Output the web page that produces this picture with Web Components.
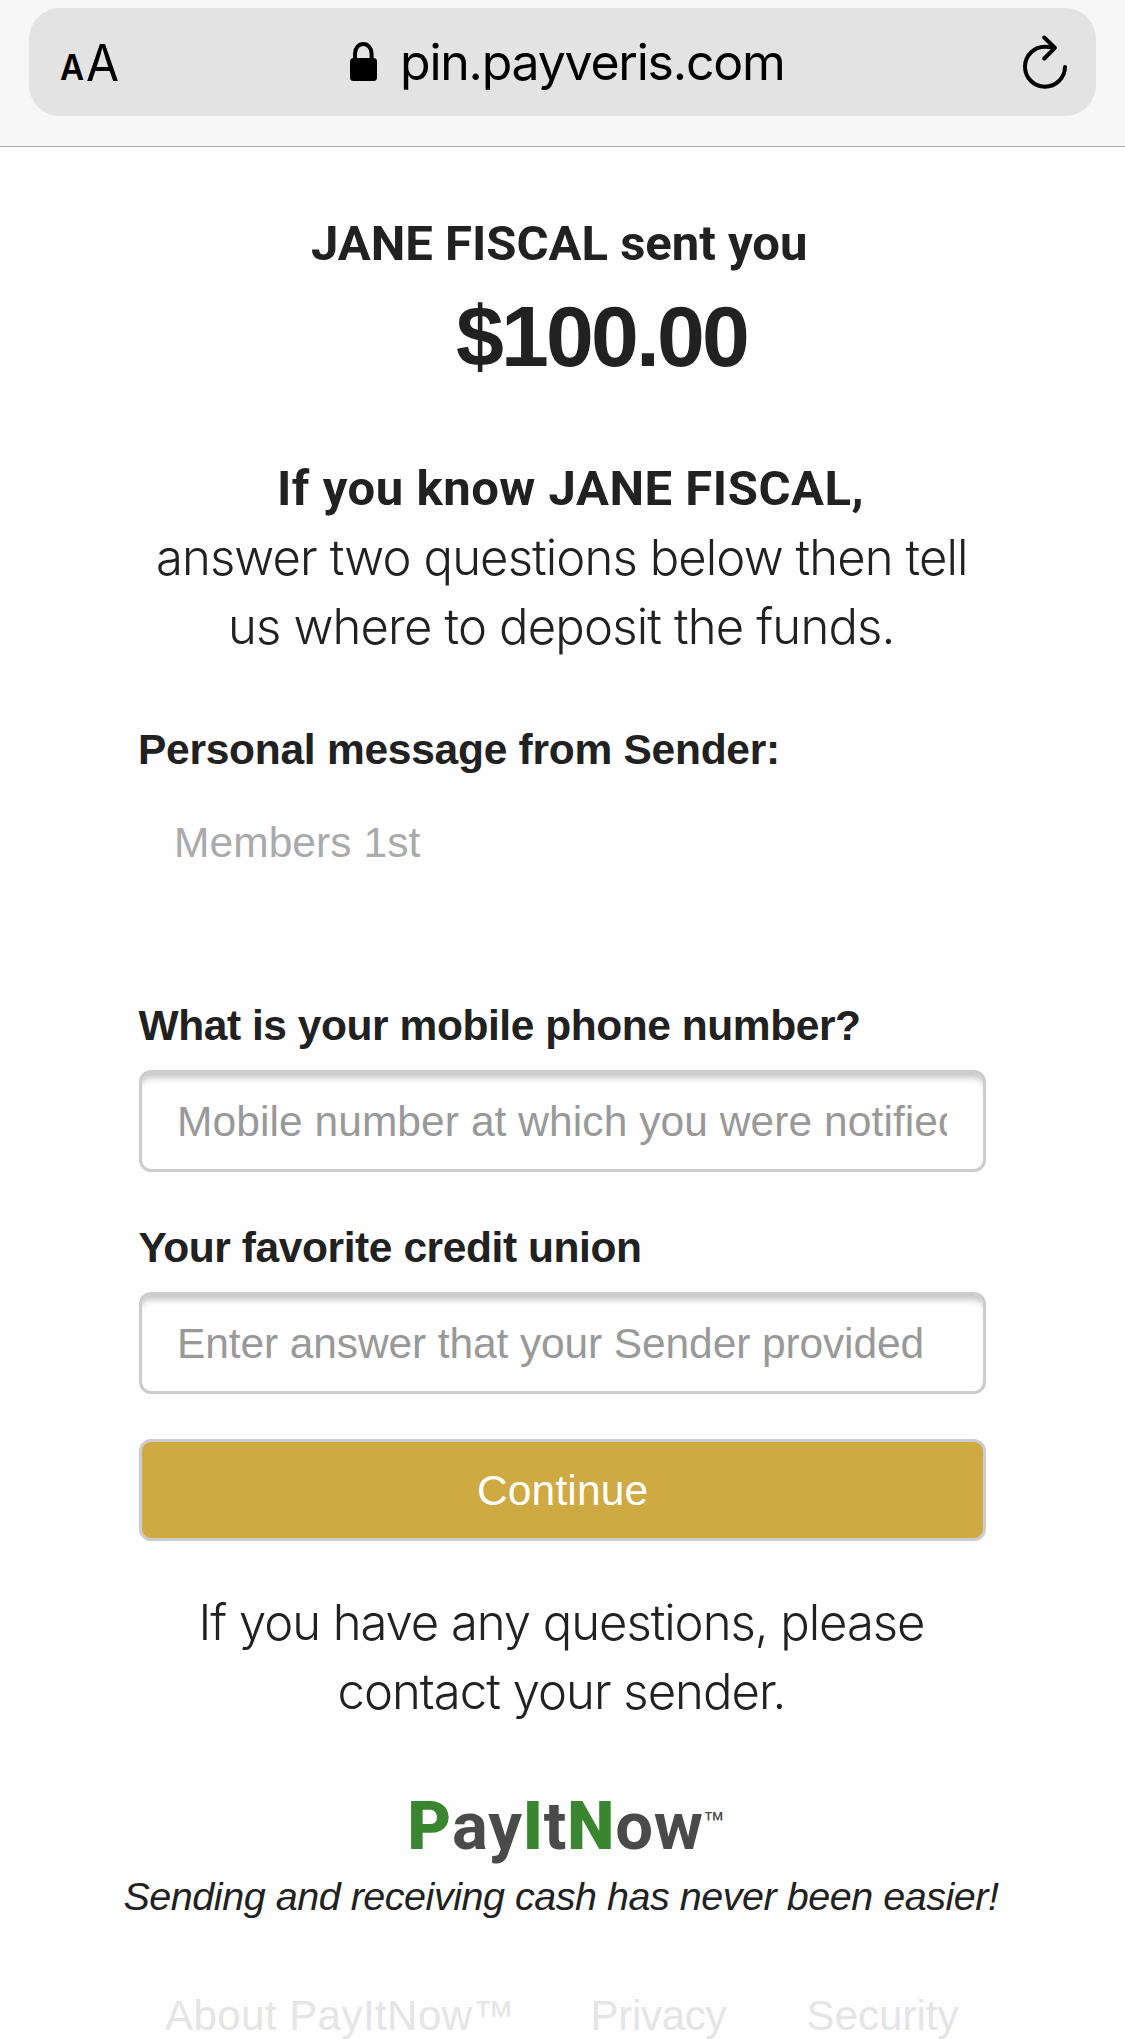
<!DOCTYPE html>
<html lang="en">
<head>
<meta charset="utf-8">
<title>PayItNow</title>
<style>
    body {
        margin: 0;
        background: #fefefe;
    }
</style>
</head>
<body>
<payment-page></payment-page>

<script>
// One line of text, spaced so that its ink starts at "start" and is "width" wide
class FitText extends HTMLElement {
    constructor() {
        super();
        this.attachShadow({ mode: 'open' });
        this.shadowRoot.innerHTML = `
            <style>
                :host {
                    display: block;
                    white-space: nowrap;
                }
                span {
                    display: block;
                    width: max-content;
                    transform-origin: 0 50%;
                }
            </style>
            <span><slot></slot></span>
        `;
    }

    connectedCallback() {
        const start = parseFloat(this.getAttribute('start')) || 0;
        const width = parseFloat(this.getAttribute('width')) || 0;
        const text = this.textContent;
        const style = getComputedStyle(this);
        const ctx = document.createElement('canvas').getContext('2d');
        ctx.font = `${style.fontStyle} ${style.fontWeight} ${style.fontSize} ${style.fontFamily}`;
        const box = ctx.measureText(text);
        const ink = box.actualBoundingBoxLeft + box.actualBoundingBoxRight;
        const span = this.shadowRoot.querySelector('span');

        if (text.length > 1) {
            span.style.letterSpacing = `${(width - ink) / (text.length - 1)}px`;
            span.style.marginLeft = `${start + box.actualBoundingBoxLeft}px`;
        } else {
            const scale = width / ink;
            span.style.transform = `scaleX(${scale})`;
            span.style.marginLeft = `${start + box.actualBoundingBoxLeft * scale}px`;
        }
    }
}

class BrowserBar extends HTMLElement {
    constructor() {
        super();
        this.attachShadow({ mode: 'open' });
        this.shadowRoot.innerHTML = `
            <style>
                :host {
                    display: block;
                    box-sizing: border-box;
                    height: 147px;
                    padding: 8px 29px 0;
                    background: #f7f7f7;
                    border-bottom: 1px solid #acacac;
                    color: #000;
                    font-family: Inter, sans-serif;
                }
                .field {
                    display: grid;
                    grid-template-columns: 58px 263px 52px 621px 73px;
                    height: 108px;
                    border-radius: 31px;
                    background: #e3e3e3;
                    line-height: 108px;
                }
                fit-text {
                    height: 108px;
                }
                .small {
                    font-size: 36px;
                    font-weight: 600;
                    line-height: 119px;
                }
                .large {
                    font-size: 51px;
                    font-weight: 400;
                    line-height: 109px;
                }
                .url {
                    font-size: 50px;
                }
                svg {
                    display: block;
                }
            </style>
            <div class="field">
                <fit-text class="small" start="30.5" width="24">A</fit-text>
                <fit-text class="large" start="0" width="31">A</fit-text>
                <svg width="52" height="108" viewBox="350 8 52 108">
                    <path d="M355 60V53.5a8.3 9.5 0 0 1 16.6 0V60" fill="none" stroke="#000" stroke-width="4"/>
                    <rect x="350" y="58" width="27" height="23" rx="3.5"/>
                </svg>
                <fit-text class="url" start="1" width="379">pin.payveris.com</fit-text>
                <svg width="73" height="108" viewBox="1023 8 73 108">
                    <path d="M1065 67a20 20 0 1 1-20-20.3q4.500 0 8.500.8M1044.300 37.500l10.500 10.300-10.500 10.700" fill="none" stroke="#000" stroke-width="4" stroke-linecap="round" stroke-linejoin="round"/>
                </svg>
            </div>
        `;
    }
}

class AnswerField extends HTMLElement {
    constructor() {
        super();
        this.attachShadow({ mode: 'open' });
        this.shadowRoot.innerHTML = `
            <style>
                :host {
                    display: block;
                    box-sizing: border-box;
                    width: 847px;
                    height: 102px;
                    padding: 1px 36px 0;
                    border: 3px solid #ccc;
                    border-radius: 12px;
                    background: #fff;
                    box-shadow: inset 0 9px 6px -4px rgba(0, 0, 0, 0.22);
                    color: #999;
                    font-size: 42.5px;
                    line-height: 96px;
                }
                div {
                    height: 95px;
                    overflow: hidden;
                }
            </style>
            <div><slot></slot></div>
        `;
    }
}

class ContinueButton extends HTMLElement {
    constructor() {
        super();
        this.attachShadow({ mode: 'open' });
        this.shadowRoot.innerHTML = `
            <style>
                button {
                    display: block;
                    box-sizing: border-box;
                    width: 847px;
                    height: 102px;
                    padding: 1px 0 0;
                    border: 3px solid #ccc;
                    border-radius: 12px;
                    background: #cfa942;
                    color: #fff;
                    font: inherit;
                    text-align: left;
                }
                :host {
                    display: block;
                    font-size: 42.5px;
                    line-height: 96px;
                }
            </style>
            <button type="button"><slot></slot></button>
        `;
    }
}

class PayItNowLogo extends HTMLElement {
    constructor() {
        super();
        this.attachShadow({ mode: 'open' });
        this.shadowRoot.innerHTML = `
            <style>
                :host {
                    display: grid;
                    grid-template-columns: 703px auto;
                    height: 70px;
                    color: #4a4a4a;
                    font: bold 67px/70px Roboto, sans-serif;
                }
                b {
                    color: #3a8530;
                }
                .mark {
                    font-size: 32px;
                    font-weight: 400;
                    line-height: 66px;
                }
            </style>
            <fit-text start="411.5" width="290"><b>P</b>ay<b>I</b>t<b>N</b>ow</fit-text>
            <fit-text class="mark" start="1" width="19">™</fit-text>
        `;
    }
}

class PaymentPage extends HTMLElement {
    constructor() {
        super();
        this.attachShadow({ mode: 'open' });
        this.shadowRoot.innerHTML = `
            <style>
                :host {
                    display: block;
                    height: 2039px;
                    overflow: hidden;
                    color: #212121;
                    font-family: "Liberation Sans", Arial, sans-serif;
                }
                main {
                    display: flex;
                    flex-direction: column;
                }
                .sender {
                    margin-top: 62px;
                    font: bold 49px/70px Roboto, sans-serif;
                }
                .amount {
                    margin-top: 10px;
                    font-size: 86px;
                    font-weight: bold;
                    line-height: 94px;
                }
                .known {
                    margin-top: 71px;
                    font: bold 49px/69px Roboto, sans-serif;
                }
                .light {
                    font: 300 49px/69px Inter, sans-serif;
                }
                .label {
                    font-size: 42.5px;
                    font-weight: bold;
                    line-height: 60px;
                }
                .message {
                    margin-top: 33px;
                    color: #aaa;
                    font-size: 42.5px;
                    line-height: 60px;
                }
                answer-field {
                    margin: 14px 0 0 139px;
                }
                continue-button {
                    margin: 45px 0 47px 139px;
                }
                pay-logo {
                    margin-top: 65px;
                }
                .tagline {
                    margin-top: 10px;
                    font-size: 39.5px;
                    font-style: italic;
                    line-height: 50px;
                }
                nav {
                    display: grid;
                    grid-template-columns: 593px 214px auto;
                    margin-top: 72px;
                    color: #e5e5e7;
                    font-size: 42px;
                    line-height: 46px;
                }
            </style>
            <browser-bar></browser-bar>
            <main>
                <fit-text class="sender" start="312" width="493">JANE FISCAL sent you</fit-text>
                <fit-text class="amount" start="457" width="290">$100.00</fit-text>
                <fit-text class="known" start="280" width="581.5">If you know JANE FISCAL,</fit-text>
                <fit-text class="light" start="158" width="807">answer two questions below then tell</fit-text>
                <fit-text class="light" start="232" width="659.5">us where to deposit the funds.</fit-text>

                <fit-text class="label" style="margin-top: 59px" start="140" width="637">Personal message from Sender:</fit-text>
                <fit-text class="message" start="177" width="243.5">Members 1st</fit-text>

                <fit-text class="label" style="margin-top: 123px" start="138.5" width="720.5">What is your mobile phone number?</fit-text>
                <answer-field>
                    <fit-text start="2" width="779">Mobile number at which you were notified</fit-text>
                </answer-field>

                <fit-text class="label" style="margin-top: 46px" start="138.5" width="501.5">Your favorite credit union</fit-text>
                <answer-field>
                    <fit-text start="2" width="741.5">Enter answer that your Sender provided</fit-text>
                </answer-field>

                <continue-button>
                    <fit-text start="337" width="167.5">Continue</fit-text>
                </continue-button>

                <fit-text class="light" start="202.5" width="720.5">If you have any questions, please</fit-text>
                <fit-text class="light" start="339.5" width="443">contact your sender.</fit-text>

                <pay-logo></pay-logo>
                <fit-text class="tagline" start="124.5" width="874.5">Sending and receiving cash has never been easier!</fit-text>
                <nav>
                    <fit-text start="165" width="345.5">About PayItNow™</fit-text>
                    <fit-text start="0.5" width="133">Privacy</fit-text>
                    <fit-text start="0.5" width="151">Security</fit-text>
                </nav>
            </main>
        `;
    }
}

// The containers come first, so that their styles are in place when the text is measured
customElements.define('browser-bar', BrowserBar);
customElements.define('answer-field', AnswerField);
customElements.define('continue-button', ContinueButton);
customElements.define('pay-logo', PayItNowLogo);
customElements.define('payment-page', PaymentPage);
customElements.define('fit-text', FitText);
</script>
</body>
</html>
